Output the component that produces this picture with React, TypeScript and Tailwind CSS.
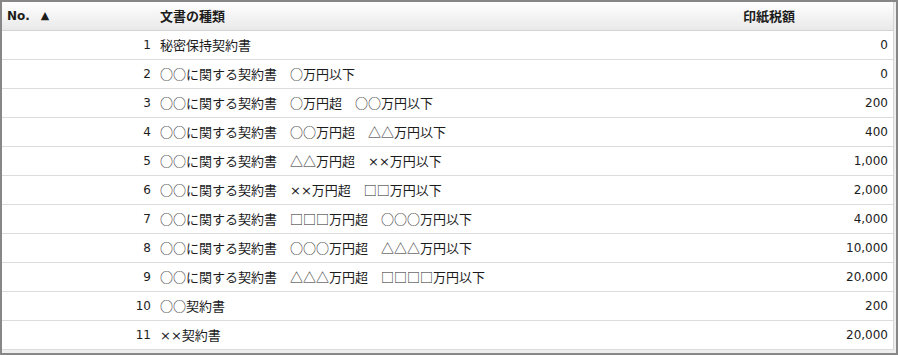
import React from "react";

interface StampRow {
  no: number;
  kind: string;
  tax: string;
}

const rows: StampRow[] = [
  { no: 1, kind: "秘密保持契約書", tax: "0" },
  { no: 2, kind: "○○に関する契約書　○万円以下", tax: "0" },
  { no: 3, kind: "○○に関する契約書　○万円超　○○万円以下", tax: "200" },
  { no: 4, kind: "○○に関する契約書　○○万円超　△△万円以下", tax: "400" },
  { no: 5, kind: "○○に関する契約書　△△万円超　××万円以下", tax: "1,000" },
  { no: 6, kind: "○○に関する契約書　××万円超　□□万円以下", tax: "2,000" },
  { no: 7, kind: "○○に関する契約書　□□□万円超　○○○万円以下", tax: "4,000" },
  { no: 8, kind: "○○に関する契約書　○○○万円超　△△△万円以下", tax: "10,000" },
  { no: 9, kind: "○○に関する契約書　△△△万円超　□□□□万円以下", tax: "20,000" },
  { no: 10, kind: "○○契約書", tax: "200" },
  { no: 11, kind: "××契約書", tax: "20,000" },
];

// × is narrow in the original, so it gets the latin font
function Kind({ text }: { text: string }) {
  const parts = text.split(/(×+)/);
  return (
    <>
      {parts.map((p, i) =>
        p.startsWith("×") ? (
          <span key={i} className="font-['DejaVu_Sans',sans-serif]">{p}</span>
        ) : (
          <span key={i}>{p}</span>
        )
      )}
    </>
  );
}

export default function App() {
  return (
    <div className="box-border w-[898px] h-[355px] border-2 border-[#878787] bg-[#eeeeee] overflow-hidden">
      <div className="w-[892px] bg-white border-r border-[#d6d6d6] text-[#1c1c1c]">
        {/* header */}
        <div className="grid grid-cols-[153px_583px_1fr] h-[29px] items-center border-b border-[#d4d4d4] bg-gradient-to-b from-[#ffffff] to-[#e9e9e9] font-bold">
          <div className="pl-[5px] flex items-center font-['DejaVu_Sans',sans-serif] text-[12px]">
            <span>No.</span>
            <span className="ml-[11px] text-[11px]">▲</span>
          </div>
          <div className="pl-[5px] font-['Noto_Sans_CJK_JP',sans-serif] text-[13px]">文書の種類</div>
          <div className="pl-[5px] font-['Noto_Sans_CJK_JP',sans-serif] text-[13px]">印紙税額</div>
        </div>

        {rows.map((row) => (
          <div
            key={row.no}
            className="grid grid-cols-[153px_583px_1fr] h-[29px] items-center border-b border-[#dcdcdc]"
          >
            <div className="pr-[4px] text-right font-['DejaVu_Sans',sans-serif] text-[12px]">{row.no}</div>
            <div className="pl-[5px] whitespace-pre font-['Noto_Sans_CJK_JP',sans-serif] text-[13px]">
              <Kind text={row.kind} />
            </div>
            <div className="pr-[5px] text-right font-['DejaVu_Sans',sans-serif] text-[12px]">{row.tax}</div>
          </div>
        ))}
      </div>
    </div>
  );
}
